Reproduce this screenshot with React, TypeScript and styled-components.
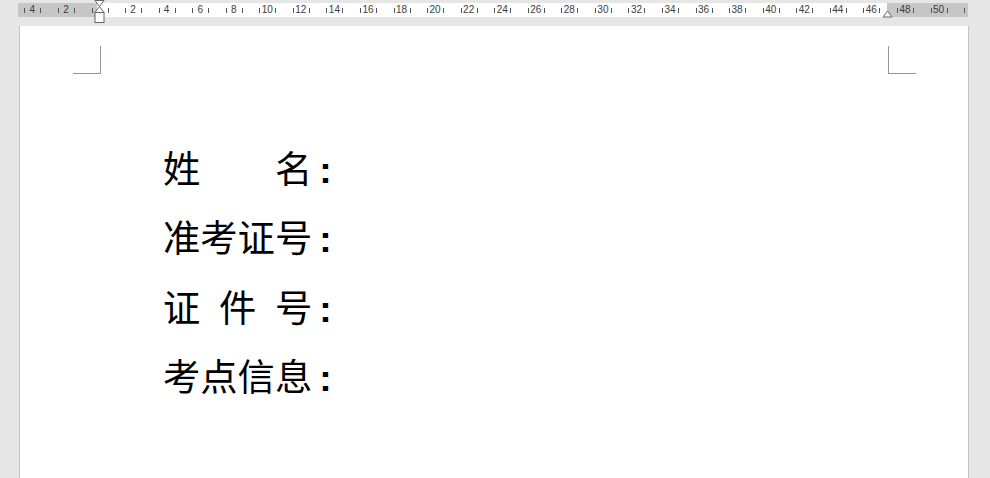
import React from "react";
import styled, { createGlobalStyle } from "styled-components";

const Global = createGlobalStyle`
  html, body { margin: 0; padding: 0; background: #e6e6e6; overflow: hidden; }
  #root { height: 478px; }
`;

const Shell = styled.div`
  width: 990px;
  height: 478px;
  background: #e6e6e6;
  display: flex;
  flex-direction: column;
  overflow: hidden;
`;

const RulerWrap = styled.div`
  position: relative;
  margin: 3px 0 0 18px;
  width: 950px;
  height: 14px;
  display: flex;
`;

const RulerSeg = styled.div<{ $w: number; $margin?: boolean }>`
  width: ${(p) => p.$w}px;
  height: 100%;
  background: ${(p) => (p.$margin ? "#c6c6c6" : "#ffffff")};
`;

const Scale = styled.div`
  position: absolute;
  inset: 0;
  overflow: hidden;
`;

const Label = styled.span`
  position: absolute;
  top: 1px;
  transform: translateX(-50%);
  font-family: "Liberation Sans", Arial, sans-serif;
  font-size: 10px;
  line-height: 12px;
  color: #3c3c3c;
`;

const Tick = styled.span`
  position: absolute;
  top: 5px;
  width: 1px;
  height: 5px;
  background: #555;
`;

const Marker = styled.svg`
  position: absolute;
  overflow: visible;
`;

const Page = styled.div`
  margin: 9px 0 0 19px;
  width: 948px;
  flex: 1;
  background: #ffffff;
  border-left: 1px solid #c4c4c4;
  border-right: 1px solid #c4c4c4;
  display: flex;
  flex-direction: column;
`;

const Corners = styled.div`
  display: flex;
  justify-content: space-between;
  padding: 20px 52px 0 53px;
`;

const Corner = styled.div<{ $side: "left" | "right" }>`
  width: 27px;
  height: 27px;
  border-bottom: 1px solid #8a9c8a;
  ${(p) => (p.$side === "left" ? "border-right" : "border-left")}: 1px solid #8a9c8a;
`;

const Form = styled.div`
  margin: 59px 0 0 143px;
  display: flex;
  flex-direction: column;
`;

const Line = styled.div`
  font-family: "Noto Sans CJK SC", "Noto Sans", sans-serif;
  font-size: 37.3px;
  line-height: 69.3px;
  height: 69.3px;
  color: #000;
  white-space: pre;
`;

const Colon = styled.span`
  font-family: "Liberation Sans", Arial, sans-serif;
  font-weight: 700;
  line-height: 1;
  padding-left: 7px;
`;

const ORIGIN = 81.5;
const STEP = 16.78;

const units: number[] = [];
for (let u = -6; u <= 52; u += 2) units.push(u);

export default function App() {
  return (
    <>
      <Global />
      <Shell>
        <RulerWrap>
          <RulerSeg $w={79} $margin />
          <RulerSeg $w={790} />
          <RulerSeg $w={81} $margin />
          <Scale>
            {units.map((u) => {
              const x = ORIGIN + u * STEP;
              return (
                <React.Fragment key={u}>
                  <Tick style={{ left: Math.round(x - 8) }} />
                  <Tick style={{ left: Math.round(x + 8) }} />
                  {u !== 0 && u > -6 && u < 52 && (
                    <Label style={{ left: x }}>{Math.abs(u)}</Label>
                  )}
                </React.Fragment>
              );
            })}
          </Scale>
          <Marker width="11" height="26" viewBox="0 0 11 26" style={{ left: 76, top: -3 }}>
            <path d="M1 0.5 H10 L5.5 6.5 Z" fill="#fff" stroke="#666" strokeWidth="1" />
            <path d="M5.5 6.5 L10 12.5 H1 Z" fill="#fff" stroke="#666" strokeWidth="1" />
            <rect x="1" y="12.5" width="9" height="10" fill="#fff" stroke="#666" strokeWidth="1" />
          </Marker>
          <Marker width="11" height="8" viewBox="0 0 11 8" style={{ left: 864, top: 7 }}>
            <path d="M5.5 1 L10 7 H1 Z" fill="#fff" stroke="#666" strokeWidth="1" />
          </Marker>
        </RulerWrap>
        <Page>
          <Corners>
            <Corner $side="left" />
            <Corner $side="right" />
          </Corners>
          <Form>
            <Line>
              {"姓　　名"}
              <Colon>:</Colon>
            </Line>
            <Line>
              {"准考证号"}
              <Colon>:</Colon>
            </Line>
            <Line>
              {"证\u2002件\u2002号"}
              <Colon>:</Colon>
            </Line>
            <Line>
              {"考点信息"}
              <Colon>:</Colon>
            </Line>
          </Form>
        </Page>
      </Shell>
    </>
  );
}
